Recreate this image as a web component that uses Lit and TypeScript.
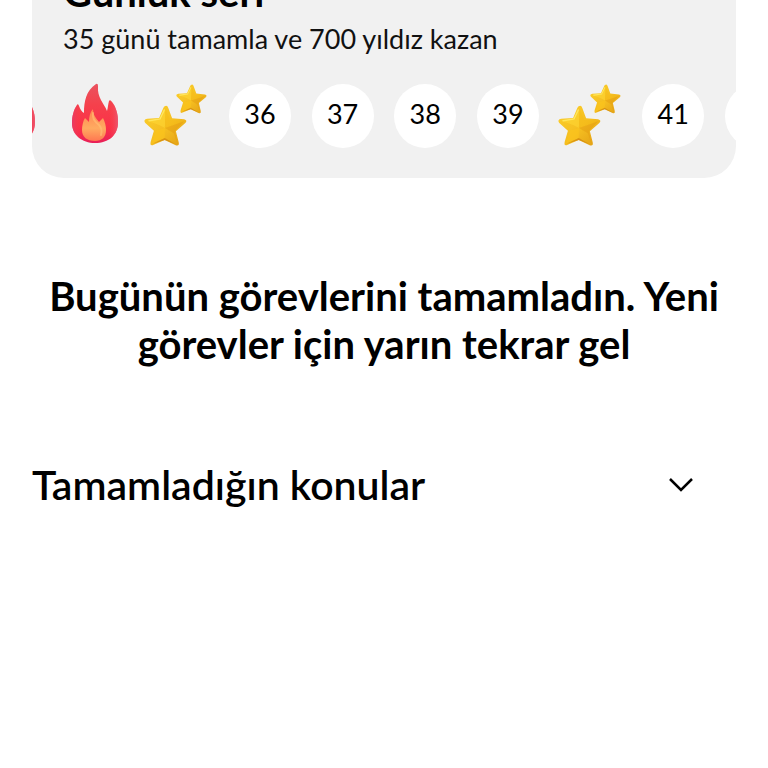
import { LitElement, html, css, svg, nothing } from "lit";
import { customElement, state } from "lit/decorators.js";

type Day = { kind: "fire" | "stars" | "day"; label: string };

const DAYS: Day[] = [
  { kind: "fire", label: "33" },
  { kind: "fire", label: "34" },
  { kind: "stars", label: "35" },
  { kind: "day", label: "36" },
  { kind: "day", label: "37" },
  { kind: "day", label: "38" },
  { kind: "day", label: "39" },
  { kind: "stars", label: "40" },
  { kind: "day", label: "41" },
  { kind: "day", label: "" },
];

@customElement("streak-icon")
export class StreakIcon extends LitElement {
  static properties = { kind: { type: String } };
  declare kind: string;

  static styles = css`
    :host { display: block; width: 62px; height: 64px; }
    svg { display: block; width: 100%; height: 100%; overflow: visible; }
  `;

  private star(transform: string) {
    return svg`<g transform=${transform}>
      <path d="M21 1Q23 0 24 3L28 13L40 14Q44 15 41 18L32 26L35 37Q36 41 32 40L21 35L10 40Q6 42 7 37L10 26L1 18Q-1 15 3 14L15 13L19 3Q20 1 21 1Z" fill="url(#gold)"/>
      <path d="M21 3L17 14L3 16L15 20L21 23Z" fill="#ffd935" opacity=".5"/>
      <path d="M21 3L26 15L40 16L29 20L21 23Z" fill="#f4b80f" opacity=".3"/>
      <path d="M40 16L29 20L21 23L30 28L34 39L31 26Z" fill="#e39a10" opacity=".45"/>
      <path d="M8 39L12 26L21 23L21 33Z" fill="#fbc51d" opacity=".6"/>
      <path d="M9 39L21 33L32 39L21 35Z" fill="#cf8510" opacity=".7"/>
      <path d="M20 5L16 14L5 16" fill="none" stroke="#ffe65c" stroke-width="1.5" stroke-linecap="round"/>
    </g>`;
  }

  render() {
    if (this.kind === "fire") {
      return html`<svg viewBox="0 0 62 64" aria-hidden="true">
        <defs>
          <linearGradient id="red" x1="0" y1="0" x2="0" y2="1">
            <stop offset="0" stop-color="#ea5360"/>
            <stop offset=".35" stop-color="#f5414c"/>
            <stop offset=".75" stop-color="#fb3048"/>
            <stop offset="1" stop-color="#e82058"/>
          </linearGradient>
          <linearGradient id="edge" x1="0" y1="0" x2="1" y2="0">
            <stop offset="0" stop-color="#e43b69" stop-opacity=".9"/>
            <stop offset=".2" stop-color="#ff3b3f" stop-opacity="0"/>
            <stop offset=".8" stop-color="#ff3b3f" stop-opacity="0"/>
            <stop offset="1" stop-color="#e85a75" stop-opacity=".9"/>
          </linearGradient>
          <linearGradient id="orange" x1="0" y1="0" x2="0" y2="1">
            <stop offset="0" stop-color="#ff8350"/>
            <stop offset=".6" stop-color="#ffab61"/>
            <stop offset="1" stop-color="#ff7751"/>
          </linearGradient>
        </defs>
        <path d="M32 0Q34 -1 34 2C33 14 40 19 43 27C44 24 44 20 45 17Q46 15 48 18C52 23 54 30 54 38C54 51 45 59 31 59C18 59 8 51 8 39C8 32 10 25 13 21Q14 19 15 22C16 25 18 28 20 29C20 17 22 7 32 0Z" fill="url(#red)"/>
        <path d="M32 0Q34 -1 34 2C33 14 40 19 43 27C44 24 44 20 45 17Q46 15 48 18C52 23 54 30 54 38C54 51 45 59 31 59C18 59 8 51 8 39C8 32 10 25 13 21Q14 19 15 22C16 25 18 28 20 29C20 17 22 7 32 0Z" fill="url(#edge)"/>
        <path d="M29 25C26 28 25 33 25 38L21 34C19 37 18 42 18 46C18 53 23 57 31 57C38 57 42 53 42 46C42 42 41 38 39 34L35 38C32 34 29 31 29 25Z" fill="url(#orange)"/>
        <path d="M29 29C28 34 31 38 35 41C37 43 38 47 37 51" fill="none" stroke="#ffc276" stroke-width="2" stroke-linecap="round" opacity=".6"/>
      </svg>`;
    }
    return html`<svg viewBox="0 0 62 64" aria-hidden="true">
      <defs>
        <linearGradient id="gold" x1="0" y1="0" x2="1" y2="1">
          <stop offset="0" stop-color="#fbd02f"/>
          <stop offset=".55" stop-color="#f5be20"/>
          <stop offset="1" stop-color="#e09c14"/>
        </linearGradient>
      </defs>
      ${this.star("translate(30 0) rotate(2 14 14) scale(.72)")}
      ${this.star("translate(-2 21) rotate(1 20 20)")}
    </svg>`;
  }
}

@customElement("app-root")
export class AppRoot extends LitElement {
  @state() open = false;

  static styles = css`
    :host {
      display: block;
      min-height: 100vh;
      overflow: hidden;
      background: #fff;
      color: #000;
      font-family: Lato, "Noto Sans", sans-serif;
    }
    .page { display: flex; flex-direction: column; padding: 0 32px; }
    .card {
      background: #f1f1f1;
      border-radius: 0 0 32px 32px;
      padding: 0 0 30px;
      overflow: hidden;
    }
    .title {
      margin: -34px 31px 2px;
      font-size: 40px;
      line-height: 52px;
      font-weight: 700;
    }
    .subtitle { margin: 0 31px; font-size: 27px; line-height: 38px; color: #111; }
    .days {
      display: flex;
      justify-content: space-between;
      list-style: none;
      margin: 26px -51px 0;
      padding: 0;
    }
    .day {
      box-sizing: border-box;
      display: flex;
      flex: none;
      justify-content: center;
      width: 62px;
      height: 64px;
      font-size: 27px;
      line-height: 60px;
    }
    .plain { background: #fff; border-radius: 50%; }
    .message {
      margin: 94px 0 0;
      text-align: center;
      font-size: 40px;
      line-height: 48px;
      font-weight: 700;
    }
    .section { margin: 91px 0 0; font-size: 41px; line-height: 52px; font-weight: 600; }
    .toggle {
      display: flex;
      align-items: center;
      justify-content: space-between;
      width: 100%;
      border: 0;
      padding: 0 42px 0 0;
      background: none;
      color: inherit;
      font: inherit;
      text-align: left;
      cursor: pointer;
    }
    .chevron { width: 26px; height: 16px; }
    .flipped { transform: rotate(180deg); }
  `;

  render() {
    return html`<main class="page">
      <section class="card">
        <h1 class="title">Günlük seri</h1>
        <p class="subtitle">35 günü tamamla ve 700 yıldız kazan</p>
        <ol class="days">
          ${DAYS.map((d) =>
            d.kind === "day"
              ? html`<li class="day plain">${d.label || nothing}</li>`
              : html`<li class="day" aria-label=${d.label}><streak-icon .kind=${d.kind}></streak-icon></li>`
          )}
        </ol>
      </section>
      <h2 class="message">Bugünün görevlerini tamamladın. Yeni görevler için yarın tekrar gel</h2>
      <h2 class="section">
        <button class="toggle" aria-expanded=${this.open} @click=${() => (this.open = !this.open)}>
          Tamamladığın konular
          <svg class="chevron ${this.open ? "flipped" : ""}" viewBox="0 0 26 16" aria-hidden="true">
            <path d="M2 2L13 13L24 2" fill="none" stroke="#000" stroke-width="2.5"/>
          </svg>
        </button>
      </h2>
    </main>`;
  }
}
